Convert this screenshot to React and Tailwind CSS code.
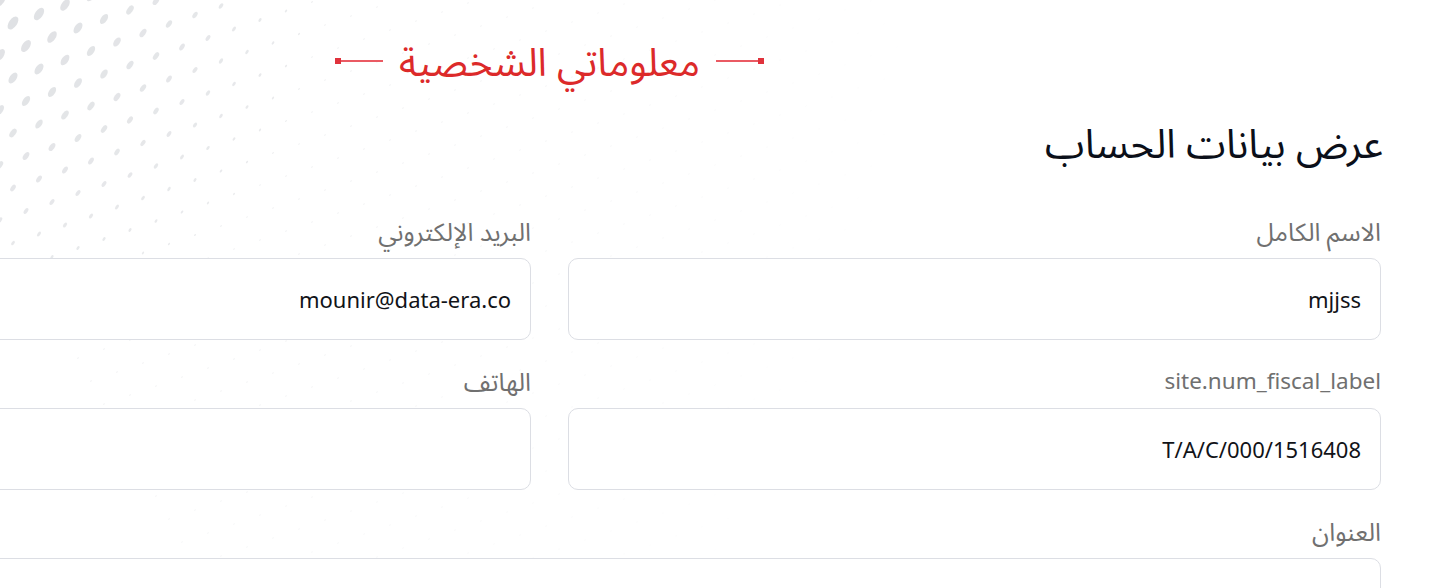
import React from 'react';

const dots = [];
for (let i = -4; i < 45; i++) {
  for (let j = -4; j < 30; j++) {
    const x = i * 26 + j * 13;
    const y = j * 23 - i * 9;
    if (x < -10 || y < -10 || x > 900 || y > 600) continue;
    const d = Math.sqrt(x * x + y * y);
    const s = Math.max(0.9, 8 - d / 45);
    const o = 0.6 * (1 - d / 950);
    if (o <= 0.03) continue;
    dots.push({ x, y, s, o });
  }
}

const DotsPattern = () => (
  <svg
    className="absolute left-0 top-0 pointer-events-none"
    width="900"
    height="600"
    viewBox="0 0 900 600"
  >
    {dots.map((p, k) => (
      <ellipse
        key={k}
        cx={p.x}
        cy={p.y}
        rx={p.s}
        ry={p.s * 0.55}
        fill="#c9ccd1"
        opacity={p.o}
        transform={`rotate(-55 ${p.x} ${p.y})`}
      />
    ))}
  </svg>
);

const Ornament = () => (
  <div className="flex items-center w-[48px]">
    <span className="block w-[6px] h-[6px] bg-[#e0323c]" />
    <span className="block flex-1 h-[2px] bg-[#ea5a63]" />
  </div>
);

const Field = ({ label, value, full, latin }) => (
  <div className={full ? 'col-span-2' : ''}>
    <label
      className={`block h-[30px] leading-[30px] text-[#707070] mb-[12px] ${
        latin ? 'text-[22.5px]' : 'text-[25px]'
      }`}
    >
      {label}
    </label>
    <div className="h-[82px] border border-[#dcdee4] rounded-[10px] bg-white flex items-center px-[19px] text-[22px] text-[#111318]">
      {value}
    </div>
  </div>
);

export default function App() {
  return (
    <div
      dir="rtl"
      className="relative w-full min-h-screen overflow-hidden bg-white pr-16 font-['Noto_Sans','Noto_Sans_Arabic','DejaVu_Sans',sans-serif]"
    >
      <DotsPattern />

      <div className="relative w-[1663px]">
        {/* section title */}
        <div className="flex items-center justify-center gap-4 pt-[36px] h-[86px]">
          <Ornament />
          <h2 className="text-[39px] leading-[50px] text-[#dc2a2a]">معلوماتي الشخصية</h2>
          <div className="scale-x-[-1]">
            <Ornament />
          </div>
        </div>

        <h1 className="mt-[31px] -mr-[2px] text-[40px] leading-[52px] text-[#0b0f19]">عرض بيانات الحساب</h1>

        {/* form grid */}
        <div className="grid grid-cols-2 gap-x-[37px] gap-y-[26px] mt-[47px]">
          <Field label="الاسم الكامل" value="mjjss" />
          <Field label="البريد الإلكتروني" value="mounir@data-era.co" />
          <Field label="site.num_fiscal_label" value="T/A/C/000/1516408" latin />
          <Field label="الهاتف" value="" />
          <Field label="العنوان" value="" full />
        </div>
      </div>
    </div>
  );
}
